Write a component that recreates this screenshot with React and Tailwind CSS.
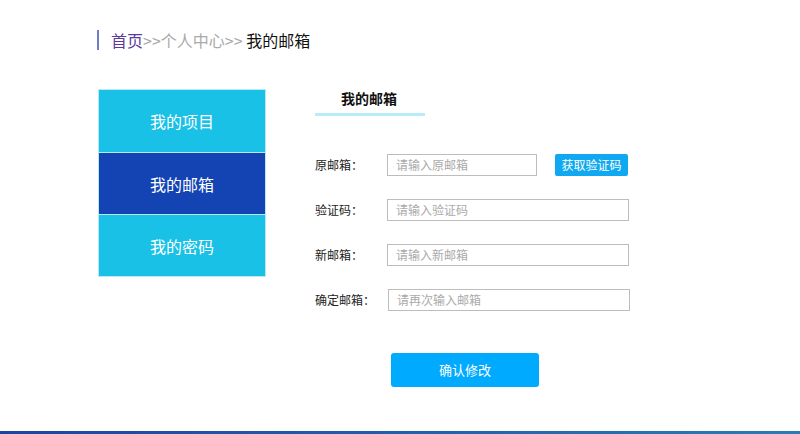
import React from 'react';

const font = { fontFamily: '"Microsoft YaHei", "Noto Sans CJK SC", sans-serif' };

const menu = [
  { label: '我的项目', active: false },
  { label: '我的邮箱', active: true },
  { label: '我的密码', active: false },
];

const Field = ({ label, placeholder, inputClass = 'w-[242px]', labelClass = 'w-[72px]', children }) => (
  <div className="flex items-center h-[22px]">
    <span className={`${labelClass} text-[12px] text-[#222]`}>{label}</span>
    <div className={`${inputClass} h-[22px] border border-[#bdbdbd] flex items-center px-2 text-[12px] text-[#aaa]`}>
      {placeholder}
    </div>
    {children}
  </div>
);

const App = () => {
  return (
    <div className="w-[800px] h-[434px] bg-white flex flex-col overflow-hidden" style={font}>
      <div className="flex items-center h-[20px] mt-[30px] ml-[97px]">
        <div className="w-[2px] h-[20px] bg-[#6d7fc0]" />
        <p className="ml-[12px] text-[16px] leading-none">
          <span className="text-[#5b3a9a]">首页</span>
          <span className="text-[#aaa]">&gt;&gt;个人中心&gt;&gt;</span>
          <span className="text-[#111]"> 我的邮箱</span>
        </p>
      </div>

      <div className="flex items-start mt-[39px] ml-[98px]">
        <div className="w-[168px] flex flex-col border border-[#b7e9f5]">
          {menu.map((m, i) => (
            <div
              key={m.label}
              className={`h-[62px] flex items-center justify-center text-[16px] text-white ${
                m.active ? 'bg-[#1444b4]' : 'bg-[#19c1e7]'
              } ${i > 0 ? 'border-t border-[#b7e9f5]' : ''}`}
            >
              {m.label}
            </div>
          ))}
        </div>

        <div className="ml-[49px] flex flex-col">
          <div className="w-[110px] pl-[26px] text-[14px] font-bold text-[#111] leading-[18px]">我的邮箱</div>
          <div className="w-[110px] h-[3px] bg-[#b8ecfa] mt-[6px]" />

          <div className="flex flex-col gap-[23px] mt-[38px]">
            <Field label="原邮箱：" placeholder="请输入原邮箱" inputClass="w-[150px]">
              <button className="ml-[18px] h-[22px] w-[73px] rounded-[2px] bg-[#10a8f0] text-white text-[12px] -mt-[1px]">
                获取验证码
              </button>
            </Field>
            <Field label="验证码：" placeholder="请输入验证码" />
            <Field label="新邮箱：" placeholder="请输入新邮箱" />
            <Field label="确定邮箱：" placeholder="请再次输入邮箱" labelClass="w-[73px]" />
          </div>

          <button className="mt-[42px] ml-[76px] w-[148px] h-[34px] rounded-[3px] bg-[#00aaff] text-white text-[13px]">
            确认修改
          </button>
        </div>
      </div>

      <div className="mt-auto h-[3px] bg-gradient-to-r from-[#1b44a2] to-[#2a7ab8]" />
    </div>
  );
};

export default App;
